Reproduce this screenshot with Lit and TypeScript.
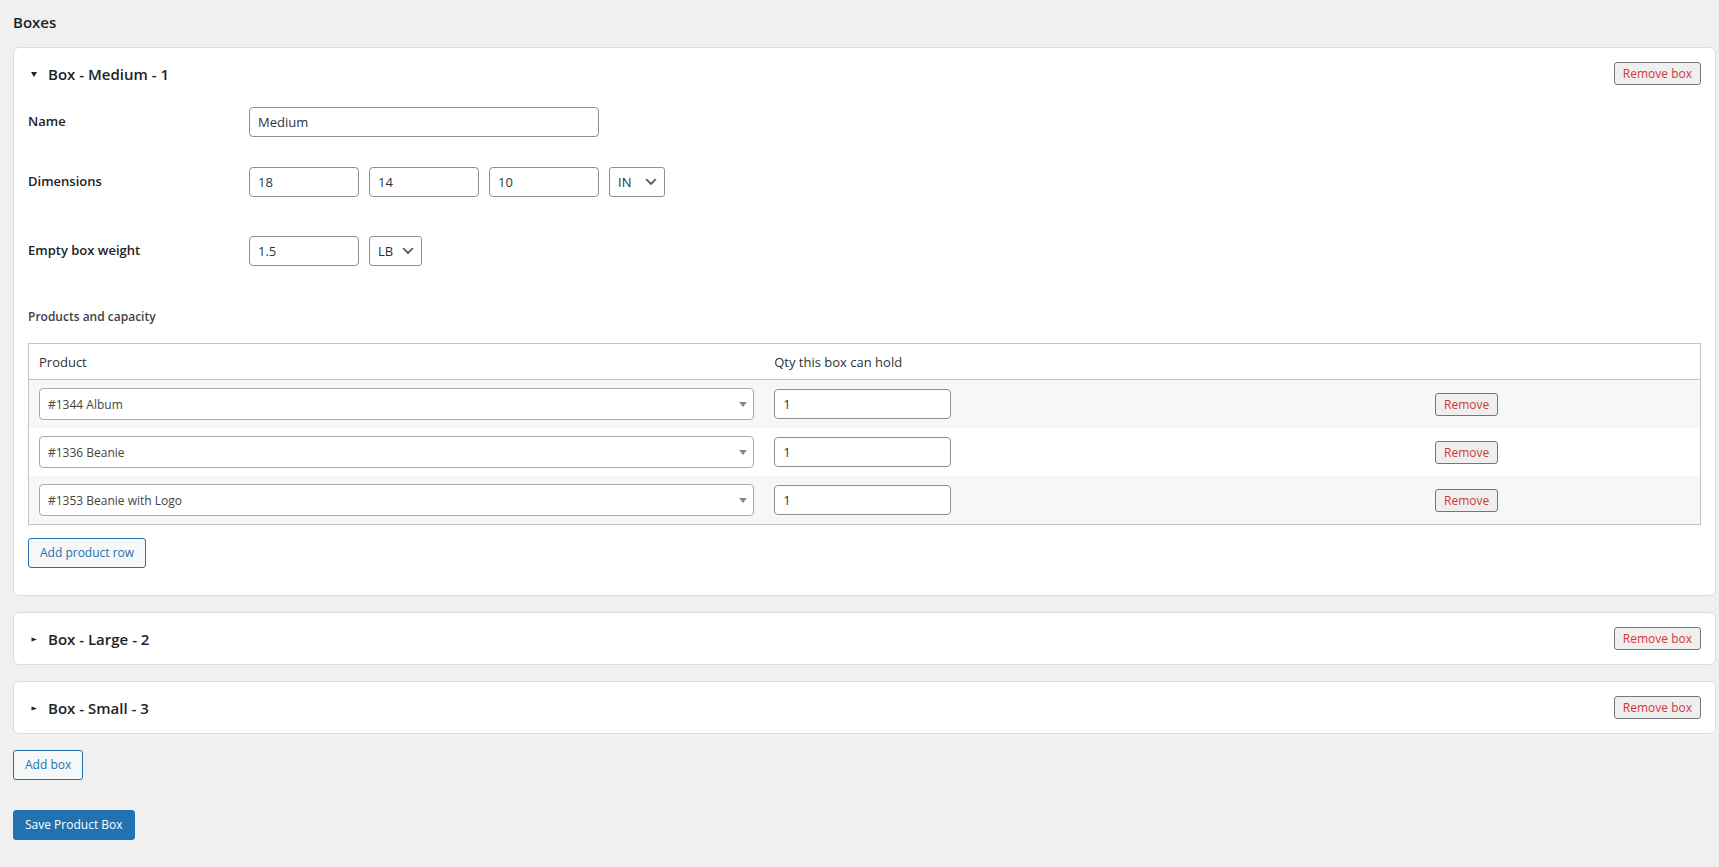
import { LitElement, html, css, svg, nothing } from 'lit';
import { customElement, property, state } from 'lit/decorators.js';

interface ProductRow {
  product: string;
  qty: number;
}

interface Box {
  id: number;
  name: string;
  dimensions: number[];
  weight: number;
  open: boolean;
  rows: ProductRow[];
}

const PRODUCTS = ['#1344 Album', '#1336 Beanie', '#1353 Beanie with Logo'];
const DIMENSION_LABELS = ['Length', 'Width', 'Height'];

const chevron = svg`<path d="M5 6l5 5 5-5 2 1-7 7-7-7 2-1z" fill="#555" />`;
const caretDown = svg`<path d="M0 0h8L4 5z" fill="#888" />`;

const controls = css`
  * {
    box-sizing: border-box;
  }
  button,
  input,
  select {
    font-family: inherit;
    margin: 0;
  }
  button {
    cursor: pointer;
  }
  .button {
    height: 30px;
    padding: 0 11px;
    border: 1px solid #2271b1;
    border-radius: 3px;
    background: #f6f7f7;
    color: #2271b1;
    font-size: 12px;
    line-height: 28px;
    white-space: nowrap;
  }
  .button.primary {
    background: #2271b1;
    color: #fff;
  }
  .remove {
    height: 23px;
    padding: 0 8px;
    border: 1px solid #767676;
    border-radius: 3px;
    background: #efefef;
    color: #d63638;
    font-size: 12px;
    line-height: 21px;
    white-space: nowrap;
  }
`;

@customElement('box-card')
export class BoxCard extends LitElement {
  static styles = [
    controls,
    css`
      :host {
        display: block;
        padding: 14px;
        border: 1px solid #dcdcde;
        border-radius: 6px;
        background: #fff;
      }
      .header {
        display: flex;
        align-items: center;
        justify-content: space-between;
      }
      .toggle {
        display: flex;
        align-items: center;
        gap: 11px;
        height: 23px;
        padding: 2px 3px 0;
        border: 0;
        background: none;
        color: #1d2327;
        font-size: 15px;
        font-weight: 600;
        line-height: 21px;
      }
      .marker {
        width: 6px;
        height: 6px;
        fill: currentColor;
      }
      .body {
        padding: 22px 0 13px;
      }
      .field {
        display: flex;
        align-items: center;
        margin-bottom: 30px;
      }
      .field.tall {
        margin-bottom: 39px;
      }
      .label {
        flex: 0 0 221px;
        padding-bottom: 2px;
        color: #1d2327;
        font-size: 13px;
        font-weight: 600;
        line-height: 18px;
      }
      .inputs {
        display: flex;
        gap: 10px;
      }
      .input {
        width: 110px;
        height: 30px;
        padding: 0 8px;
        border: 1px solid #8c8f94;
        border-radius: 4px;
        background: #fff;
        color: #2c3338;
        font-size: 13px;
      }
      .input.wide {
        width: 350px;
      }
      .input.qty {
        display: block;
        width: 177px;
      }
      .select {
        display: grid;
        align-items: center;
      }
      .select > * {
        grid-area: 1 / 1;
      }
      .select select {
        appearance: none;
        height: 30px;
        padding: 0 25px 0 8px;
        border: 1px solid #8c8f94;
        border-radius: 3px;
        background: #fff;
        color: #2c3338;
        font-size: 13px;
      }
      .select svg {
        justify-self: end;
        pointer-events: none;
      }
      .chevron {
        width: 16px;
        height: 16px;
        margin-right: 6px;
      }
      .select.weight select {
        min-width: 53px;
      }
      .select.length select {
        min-width: 56px;
      }
      .select.product select {
        width: 100%;
        height: 32px;
        border-color: #a7aaad;
        border-radius: 4px;
        color: #444;
        font-size: 12px;
      }
      .caret {
        width: 8px;
        height: 5px;
        margin-right: 7px;
      }
      .subtitle {
        margin: 42px 0 17px;
        color: #3c434a;
        font-size: 12px;
        font-weight: 600;
        line-height: 18px;
      }
      .products {
        width: 100%;
        table-layout: fixed;
        border: 1px solid #c3c4c7;
        border-spacing: 0;
        color: #2c3338;
        font-size: 13px;
      }
      .products th {
        height: 36px;
        padding: 0 10px;
        border-bottom: 1px solid #c3c4c7;
        font-weight: 400;
        text-align: left;
      }
      .products td {
        height: 48px;
        padding: 0 10px;
      }
      .products tbody tr:nth-child(odd) {
        background: #f6f7f7;
      }
      .products .col-product {
        width: 44%;
      }
      .products .col-actions {
        width: 275px;
      }
      .products .remove {
        display: block;
      }
      .add-row {
        margin-top: 13px;
      }
    `,
  ];

  @property({ attribute: false }) box!: Box;

  render() {
    const { box } = this;
    return html`
      <div class="header">
        <button
          class="toggle"
          type="button"
          aria-expanded=${box.open ? 'true' : 'false'}
          @click=${this.toggle}
        >
          <svg class="marker" viewBox="0 0 6 6" aria-hidden="true">
            <path d=${box.open ? 'M0 0h6L3 5z' : 'M0.5 0.5v4L6 2.5z'} />
          </svg>
          Box - ${box.name} - ${box.id}
        </button>
        <button class="remove" type="button" @click=${() => this.emit('remove-box')}>
          Remove box
        </button>
      </div>
      ${box.open ? this.renderBody() : nothing}
    `;
  }

  renderBody() {
    const { box } = this;
    return html`
      <div class="body">
        <div class="field">
          <label class="label" for="name">Name</label>
          <input class="input wide" id="name" type="text" .value=${box.name} />
        </div>
        <div class="field tall">
          <label class="label" for="dimension-0">Dimensions</label>
          <div class="inputs">
            ${box.dimensions.map(
              (value, i) => html`
                <input
                  class="input"
                  id="dimension-${i}"
                  type="text"
                  inputmode="decimal"
                  aria-label=${DIMENSION_LABELS[i]}
                  .value=${String(value)}
                />
              `
            )}
            ${this.renderUnit('length', 'Dimension unit', ['IN', 'CM'])}
          </div>
        </div>
        <div class="field">
          <label class="label" for="weight">Empty box weight</label>
          <div class="inputs">
            <input
              class="input"
              id="weight"
              type="text"
              inputmode="decimal"
              .value=${String(box.weight)}
            />
            ${this.renderUnit('weight', 'Weight unit', ['LB', 'KG'])}
          </div>
        </div>
        <h4 class="subtitle">Products and capacity</h4>
        <table class="products">
          <thead>
            <tr>
              <th class="col-product" scope="col">Product</th>
              <th scope="col">Qty this box can hold</th>
              <th class="col-actions"></th>
            </tr>
          </thead>
          <tbody>
            ${box.rows.map((row) => this.renderRow(row))}
          </tbody>
        </table>
        <button class="button add-row" type="button" @click=${this.addRow}>
          Add product row
        </button>
      </div>
    `;
  }

  renderUnit(kind: string, label: string, units: string[]) {
    return html`
      <div class="select ${kind}">
        <select aria-label=${label}>
          ${units.map((unit) => html`<option>${unit}</option>`)}
        </select>
        <svg class="chevron" viewBox="0 0 20 20" aria-hidden="true">${chevron}</svg>
      </div>
    `;
  }

  renderRow(row: ProductRow) {
    return html`
      <tr>
        <td>
          <div class="select product">
            <select aria-label="Product">
              ${PRODUCTS.map(
                (name) => html`<option ?selected=${name === row.product}>${name}</option>`
              )}
            </select>
            <svg class="caret" viewBox="0 0 8 5" aria-hidden="true">${caretDown}</svg>
          </div>
        </td>
        <td>
          <input
            class="input qty"
            type="text"
            inputmode="numeric"
            aria-label="Qty this box can hold"
            .value=${String(row.qty)}
          />
        </td>
        <td>
          <button class="remove" type="button" @click=${() => this.removeRow(row)}>
            Remove
          </button>
        </td>
      </tr>
    `;
  }

  toggle() {
    this.box.open = !this.box.open;
    this.requestUpdate();
  }

  addRow() {
    this.box.rows.push({ product: PRODUCTS[0], qty: 1 });
    this.requestUpdate();
  }

  removeRow(row: ProductRow) {
    this.box.rows = this.box.rows.filter((r) => r !== row);
    this.requestUpdate();
  }

  emit(name: string) {
    this.dispatchEvent(new CustomEvent(name));
  }
}

@customElement('app-root')
export class AppRoot extends LitElement {
  static styles = [
    controls,
    css`
      :host {
        display: block;
        box-sizing: border-box;
        min-height: 100vh;
        padding: 12px 3px 27px 13px;
        background: #f0f0f0;
        color: #3c434a;
        font-family: 'Open Sans', 'Noto Sans', sans-serif;
      }
      .title {
        margin: 0 0 15px;
        color: #1d2327;
        font-size: 15px;
        font-weight: 600;
        line-height: 20px;
      }
      .boxes {
        display: flex;
        flex-direction: column;
        gap: 16px;
        margin-bottom: 16px;
      }
      .actions {
        display: flex;
        flex-direction: column;
        align-items: flex-start;
        gap: 30px;
      }
    `,
  ];

  @state() boxes: Box[] = [
    {
      id: 1,
      name: 'Medium',
      dimensions: [18, 14, 10],
      weight: 1.5,
      open: true,
      rows: PRODUCTS.map((product) => ({ product, qty: 1 })),
    },
    { id: 2, name: 'Large', dimensions: [24, 18, 12], weight: 2, open: false, rows: [] },
    { id: 3, name: 'Small', dimensions: [10, 8, 6], weight: 1, open: false, rows: [] },
  ];

  render() {
    return html`
      <h2 class="title">Boxes</h2>
      <div class="boxes">
        ${this.boxes.map(
          (box) => html`
            <box-card .box=${box} @remove-box=${() => this.removeBox(box)}></box-card>
          `
        )}
      </div>
      <div class="actions">
        <button class="button" type="button" @click=${this.addBox}>Add box</button>
        <button class="button primary" type="submit">Save Product Box</button>
      </div>
    `;
  }

  addBox() {
    const id = Math.max(0, ...this.boxes.map((b) => b.id)) + 1;
    this.boxes = [
      ...this.boxes,
      { id, name: 'New', dimensions: [0, 0, 0], weight: 0, open: true, rows: [] },
    ];
  }

  removeBox(box: Box) {
    this.boxes = this.boxes.filter((b) => b !== box);
  }
}
